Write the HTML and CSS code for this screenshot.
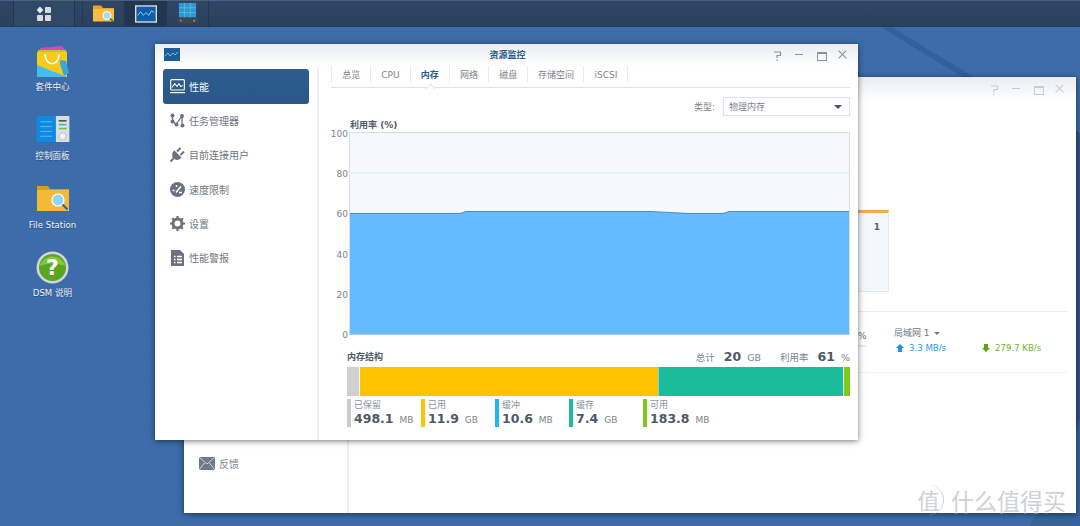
FILE: index.html
```html
<!DOCTYPE html>
<html lang="zh">
<head>
<meta charset="utf-8">
<title>资源监控</title>
<link rel="stylesheet" href="styles.css">
</head>
<body>
<div class="desktop">
  <svg class="wallpaper" viewBox="0 0 1080 526" preserveAspectRatio="none">
    <defs>
      <pattern id="dots" width="3" height="3" patternUnits="userSpaceOnUse"><rect width="1" height="1" fill="#fff" opacity=".02"/><rect x="1" y="1" width="1" height="1" fill="#000" opacity=".02"/></pattern>
    </defs>
    <rect width="1080" height="526" fill="#3d6cab"/>
    <polygon points="860,8 860,14 962,77 974,77" fill="#32609a"/>
    <polygon points="1076,130 1080,133 1080,526 1076,526" fill="#2d5689"/>
    <polygon points="1030,526 1080,420 1080,526" fill="#35639d"/>
    <rect width="1080" height="526" fill="url(#dots)"/>
  </svg>

  <header class="taskbar">
    <button class="tb-btn tb-main">
      <svg width="16" height="16" viewBox="0 0 16 16"><path d="M4 0.5 7.3 4 4 7.5 0.7 4Z" fill="#e8ecf0"/><rect x="9" y="1" width="6" height="6" rx=".8" fill="#d5dbe1"/><rect x="1" y="9" width="6" height="6" rx=".8" fill="#d5dbe1"/><rect x="9" y="9" width="6" height="6" rx=".8" fill="#d5dbe1"/></svg>
    </button>
    <button class="tb-btn tb-app">
      <svg width="23" height="19" viewBox="0 0 23 19"><path d="M1 1.500h8l2 2.500h11v13H1Z" fill="#e8a428"/><path d="M1 5h21v12.500H1Z" fill="#f8bd43"/><circle cx="15" cy="11.500" r="4" fill="#a5dcf5" stroke="#fff"/><path d="M18 14.500l3.500 3" stroke="#2b6d90" stroke-width="1.600"/></svg>
    </button>
    <button class="tb-btn tb-app tb-active">
      <svg width="22" height="18" viewBox="0 0 24 19"><rect x=".75" y=".75" width="22.500" height="17.500" fill="#0f5ea6" stroke="#d8dde3" stroke-width="1.500"/><path d="M3 11l3-4 3 4 3-3 3 3 3-5 3 2" fill="none" stroke="#9fd3f2"/></svg>
    </button>
    <button class="tb-btn tb-app">
      <svg width="21" height="23" viewBox="0 0 22 24"><rect x="2" y="1" width="18" height="15" fill="#2f97cf"/><path d="M2 6h18M2 11h18M8 1v15M14 1v15" stroke="#62bde3" stroke-width=".8"/><path d="M0 17h22v5H0Z" fill="#40464c"/><circle cx="4" cy="19.500" r="1" fill="#99a"/><circle cx="18" cy="19.500" r="1" fill="#99a"/></svg>
    </button>
  </header>

  <nav class="shortcuts">
    <div class="shortcut">
      <svg width="34" height="34" viewBox="0 0 34 34"><path d="M4 3 26 1l5 6H3Z" fill="#e040d0"/><path d="M2 5h28v2H2Z" fill="#a6d13c"/><path d="M1 7h30v25H1Z" fill="#f9c91c"/><path d="M1 20 31 32H1Z" fill="#43bdf0"/><path d="M9 9c0 13 14 13 14 0" fill="none" stroke="#fff" stroke-width="1.600"/><path d="M24 15l6 1 3 12-5 3-4-12Z" fill="#3aa5d8"/></svg>
      <span>套件中心</span>
    </div>
    <div class="shortcut">
      <svg class="drop" width="34" height="27" viewBox="0 0 34 28"><rect width="20" height="27" fill="#0f8ae0"/><path d="M4 6h12M4 11h12M4 16h12M4 21h12" stroke="#58bdf5"/><rect x="20" width="14" height="27" fill="#d9dee0"/><path d="M23 5h8" stroke="#444" stroke-width="1.500"/><path d="M23 9h8" stroke="#30b5e5" stroke-width="1.500"/><path d="M23 13h8" stroke="#77c030" stroke-width="1.500"/><circle cx="27" cy="21" r="3.500" fill="#f2f5f6" stroke="#aab" stroke-width=".6"/></svg>
      <span>控制面板</span>
    </div>
    <div class="shortcut">
      <svg class="drop" width="34" height="28" viewBox="0 0 34 28"><path d="M1 1h11l2 3h19v22H1Z" fill="#dc9a24"/><path d="M1 5h32v21H1Z" fill="#f7b738"/><circle cx="22" cy="15" r="6" fill="#8fd6f8" stroke="#fff" stroke-width="1.200"/><path d="M26.500 19.500l5 5" stroke="#2b6d90" stroke-width="2.200"/></svg>
      <span>File Station</span>
    </div>
    <div class="shortcut">
      <svg class="raise" width="33" height="33" viewBox="0 0 33 33"><circle cx="16.500" cy="16.500" r="16" fill="#cfd6dc"/><circle cx="16.500" cy="16.500" r="13.500" fill="#5aa51e"/><path d="M3.500 15a13.500 13.500 0 0 1 26 0Q16.500 10 3.500 15Z" fill="#83c53e"/><text x="16.500" y="23.500" text-anchor="middle" class="help-mark">?</text></svg>
      <span>DSM 说明</span>
    </div>
  </nav>

  <section class="window win-back">
    <div class="titlebar">
      <div class="controls controls-faint">
        <i class="c"><svg width="9" height="11" viewBox="0 0 9 11"><path d="M1 2H7.500V5.500H4V8M4 9.500V11" fill="none" stroke="currentColor" stroke-width="1.200"/></svg></i><i class="c c-min"></i><i class="c c-max"></i><i class="c c-close"></i>
      </div>
    </div>
    <div class="back-body">
      <aside class="back-side">
        <div class="feedback">
          <svg width="16" height="13" viewBox="0 0 16 13"><rect width="16" height="13" fill="#6f7a87"/><path d="M0 0l8 7 8-7M0 13l5.500-7M16 13l-5.500-7" fill="none" stroke="#e8eaed" stroke-width=".8"/></svg>
          <span>反馈</span>
        </div>
      </aside>
      <div class="back-main">
        <div class="back-top"><div class="card"><b>1</b></div></div>
        <div class="net-row">
          <span class="pct">%</span><i class="pct-bar"></i>
          <div class="net">
            <div class="net-name">局域网 1 <em class="caret"></em></div>
            <div class="net-rates">
              <span class="up"><svg width="8" height="8" viewBox="0 0 8 8"><path d="M4 0 8 4H6V8H2V4H0Z" fill="#1f93e8"/></svg>3.3 MB/s</span>
              <span class="down"><svg width="8" height="8" viewBox="0 0 8 8"><path d="M4 8 8 4H6V0H2V4H0Z" fill="#5aa512"/></svg>279.7 KB/s</span>
            </div>
          </div>
        </div>
      </div>
    </div>
  </section>

  <section class="window win-front">
    <div class="titlebar">
      <svg class="title-icon" width="16" height="13" viewBox="0 0 16 13"><rect width="16" height="13" fill="#1a5e9c"/><path d="M1 8l3-3 2 3 3-3 2 2 3-3" fill="none" stroke="#9ad0f0" stroke-width=".8"/></svg>
      <h1>资源监控</h1>
      <div class="controls">
        <i class="c"><svg width="9" height="11" viewBox="0 0 9 11"><path d="M1 2H7.500V5.500H4V8M4 9.500V11" fill="none" stroke="currentColor" stroke-width="1.200"/></svg></i><i class="c c-min"></i><i class="c c-max"></i><i class="c c-close"></i>
      </div>
    </div>
    <div class="front-body">
      <aside class="sidebar">
        <div class="side-item selected">
          <svg width="15" height="15" viewBox="0 0 16 16"><rect x=".7" y=".7" width="14.600" height="11" rx="1" fill="none" stroke="#fff" stroke-width="1.200"/><path d="M2 9l3-4 2.500 3 2-3 2 3 2-1" fill="none" stroke="#fff" stroke-width="1.100"/><path d="M0 14.500h16" stroke="#fff" stroke-width="1.300"/></svg>
          <span>性能</span>
        </div>
        <div class="side-item">
          <svg width="15" height="15" viewBox="0 0 15 15"><path d="M2.500 2.500V8L6 11.500l6-8.500V12.500" fill="none" stroke="#69737f" stroke-width="1.300"/><circle cx="2.500" cy="2.500" r="2" fill="#69737f"/><circle cx="2.500" cy="8.500" r="2" fill="#69737f"/><circle cx="6.500" cy="11.500" r="2" fill="#69737f"/><circle cx="12" cy="3" r="2" fill="#69737f"/><circle cx="12.500" cy="12.500" r="2" fill="#69737f"/></svg>
          <span>任务管理器</span>
        </div>
        <div class="side-item">
          <svg width="15" height="15" viewBox="0 0 15 15"><path d="M4.500 3.500 11.500 10.500C9.500 13.500 5.500 13.500 3.500 11.500S1.500 5.500 4.500 3.500Z" fill="#69737f"/><path d="M7 4.500 10.500 1M10.500 8l3.500-3.500M3.500 11.500 .5 14.500" stroke="#69737f" stroke-width="2"/></svg>
          <span>目前连接用户</span>
        </div>
        <div class="side-item">
          <svg width="15" height="15" viewBox="0 0 15 15"><circle cx="7.500" cy="7.500" r="7.500" fill="#69737f"/><path d="M2.500 8.500h2M6.500 3v2M11 4.500 7.500 8.500l-1.500 2" fill="none" stroke="#fff" stroke-width="1.500"/><path d="M9 10.500h3" stroke="#fff" stroke-width="1.500"/></svg>
          <span>速度限制</span>
        </div>
        <div class="side-item">
          <svg width="15" height="15" viewBox="0 0 15 15"><circle cx="7.500" cy="7.500" r="4.500" fill="none" stroke="#69737f" stroke-width="3"/><path d="M7.500 0v15M0 7.500h15M2.200 2.200l10.600 10.600M12.800 2.200 2.200 12.800" stroke="#69737f" stroke-width="2.200" stroke-dasharray="2.500 10 2.500 0"/></svg>
          <span>设置</span>
        </div>
        <div class="side-item">
          <svg width="15" height="16" viewBox="0 0 15 16"><path d="M1 0h9l4 4v12H1Z" fill="#69737f"/><path d="M4 6.500h1.500M7 6.500h5M4 9.500h1.500M7 9.500h5M4 12.500h1.500M7 12.500h5" stroke="#fff" stroke-width="1.300"/></svg>
          <span>性能警报</span>
        </div>
      </aside>
      <main class="panel">
        <ul class="tabs">
          <li>总览</li><li>CPU</li><li class="on">内存</li><li>网络</li><li>磁盘</li><li class="wide">存储空间</li><li class="wide2">iSCSI</li>
        </ul>
        <div class="type-row">
          <label>类型:</label>
          <div class="select"><span>物理内存</span><em class="caret dark"></em></div>
        </div>
        <div class="chart-title">利用率 (%)</div>
        <svg class="chart" width="519" height="212" viewBox="0 0 519 212">
          <rect x="18.500" y=".5" width="500" height="202" fill="#f5f9fe" stroke="#d6dee7"/>
          <path d="M19 41h499M19 81h499M19 122h499M19 162h499" stroke="#e2e8ef"/>
          <path d="M19 81.500H129L135 79.500H320L358 81.500H392L398 79.500H518V202.500H19Z" fill="#66baff"/>
          <path d="M19 81.500H129L135 79.500H320L358 81.500H392L398 79.500H518" fill="none" stroke="#3b78ad" stroke-width=".8"/>
          <g class="ticks">
            <text x="17" y="5">100</text><text x="17" y="45">80</text><text x="17" y="85">60</text><text x="17" y="126">40</text><text x="17" y="166">20</text><text x="17" y="206">0</text>
          </g>
        </svg>
        <div class="mem-head">
          <h2>内存结构</h2>
          <div class="mem-stats">
            <span class="st">总计</span><b>20</b><span class="un">GB</span>
            <span class="st st2">利用率</span><b>61</b><span class="un">%</span>
          </div>
        </div>
        <div class="mem-bar">
          <i class="seg s-res"></i><i class="seg s-used"></i><i class="seg s-buf"></i><i class="seg s-cache"></i><i class="seg s-free"></i>
        </div>
        <div class="legend">
          <div class="lg l-res"><small>已保留</small><p><b>498.1</b><span>MB</span></p></div>
          <div class="lg l-used"><small>已用</small><p><b>11.9</b><span>GB</span></p></div>
          <div class="lg l-buf"><small>缓冲</small><p><b>10.6</b><span>MB</span></p></div>
          <div class="lg l-cache"><small>缓存</small><p><b>7.4</b><span>GB</span></p></div>
          <div class="lg l-free"><small>可用</small><p><b>183.8</b><span>MB</span></p></div>
        </div>
      </main>
    </div>
  </section>

  <div class="watermark"><span class="wm-circle">值</span><span class="wm-text">什么值得买</span></div>
</div>
</body>
</html>
```
FILE: styles.css
```css
* { box-sizing: border-box; }
html, body { margin: 0; height: 100%; overflow: hidden; }
body { font-family: "DejaVu Sans", "Noto Sans CJK SC", sans-serif; font-size: 9px; color: #5b6570; }
.desktop { position: relative; width: 1080px; height: 526px; overflow: hidden; }
.wallpaper { position: absolute; inset: 0; width: 100%; height: 100%; }

.taskbar { position: relative; display: flex; height: 27px; padding-left: 13px; background: linear-gradient(rgba(46,69,99,.97), rgba(42,63,91,.97)); border-top: 1px solid #4a5f7a; border-bottom: 1px solid #253a56; }
.tb-btn { display: flex; align-items: center; justify-content: center; padding: 0; background: transparent; border: 0; border-left: 1px solid #22374f; }
.tb-main { width: 62px; background: #304966; margin-right: 7px; border-right: 1px solid #22374f; }
.tb-app { width: 42px; }
.tb-app:last-child { border-right: 1px solid #22374f; width: 43px; }
.tb-active { background: #223650; }

.shortcuts { position: absolute; left: 12px; top: 27px; width: 81px; display: flex; flex-direction: column; padding-top: 18px; }
.shortcut { height: 69px; display: flex; flex-direction: column; align-items: center; color: #fff; font-size: 8.6px; line-height: 12px; position: relative; }
.shortcut svg { display: block; }
.shortcut svg.drop { margin-top: 2px; }
.shortcut svg.raise { margin-top: -1px; }
.shortcut span { position: absolute; top: 36px; white-space: nowrap; text-shadow: 0 1px 1px rgba(0,0,0,.35); opacity: .92; }
.shortcut:last-child span { top: 35px; }
.help-mark { font: bold 22px "DejaVu Sans", sans-serif; fill: #fff; }

.window { position: absolute; background: #fff; box-shadow: 0 1px 6px rgba(0,0,0,.55); display: flex; flex-direction: column; }
.win-back { left: 184px; top: 77px; width: 892px; height: 436px; }
.win-front { left: 155px; top: 44px; width: 703px; height: 396px; }

.titlebar { position: relative; height: 22px; flex: none; display: flex; align-items: center; justify-content: center; padding-left: 2px; background: linear-gradient(#e9ecf1, #fff); }
.win-back .titlebar { height: 24px; }
.title-icon { position: absolute; left: 9px; top: 4px; }
h1 { margin: 0; font-size: 9px; font-weight: bold; color: #2a5a8e; line-height: 22px; }
.controls { position: absolute; right: 4px; top: 0; height: 22px; display: flex; align-items: center; }
.win-back .controls { height: 24px; right: 5px; }
.c { position: relative; display: flex; align-items: center; justify-content: center; width: 22px; height: 12px; color: #8a929c; }
.controls-faint .c { color: #c8ccd2; }
.c-min::before { content: ""; position: absolute; left: 7px; top: 5px; width: 8px; height: 1px; background: currentColor; }
.c-max::before { content: ""; position: absolute; left: 7px; top: 3px; width: 8px; height: 6px; border: 1px solid currentColor; border-top-width: 2px; }
.c-close::before, .c-close::after { content: ""; position: absolute; left: 5px; top: 5px; width: 11px; height: 1px; background: currentColor; transform: rotate(45deg); }
.c-close::after { transform: rotate(-45deg); }

.front-body { flex: 1; display: flex; min-height: 0; }
.sidebar { width: 164px; flex: none; padding: 3px 8px 0 8px; border-right: 2px solid #eef0f2; }
.side-item { height: 34.3px; display: flex; align-items: center; gap: 4px; padding-left: 7px; font-size: 10px; color: #6f7780; }
.side-item svg { flex: none; }
.side-item.selected { height: 35px; margin-bottom: -0.7px; background: linear-gradient(#2f5d90, #2a5688); border-radius: 3px; color: #fff; }
.panel { flex: 1; min-width: 0; padding: 0 8px 0 12px; display: flex; flex-direction: column; }

.tabs { list-style: none; margin: 0; padding: 0; height: 22px; display: flex; flex: none; border-bottom: 1px solid #dfe3e8; position: relative; }
.tabs li { width: 39.3px; height: 17px; display: flex; align-items: center; justify-content: center; border-left: 1px solid #e6ecf3; color: #7c848d; font-size: 9px; }
.tabs li.wide { width: 56px; }
.tabs li.wide2 { width: 45px; border-right: 1px solid #e6ecf3; }
.tabs li.on { color: #2a5a8e; font-weight: bold; position: relative; }
.tabs li.on::after { content: ""; position: absolute; left: 50%; top: 17px; width: 6px; height: 6px; margin-left: -3px; margin-top: 2px; background: #fff; border-left: 1px solid #dfe3e8; border-top: 1px solid #dfe3e8; transform: rotate(45deg); }

.type-row { display: flex; justify-content: flex-end; align-items: center; height: 19px; margin-top: 9px; flex: none; }
.type-row label { color: #7c848d; margin-right: 8px; font-size: 9px; }
.select { width: 127px; height: 19px; border: 1px solid #d9e2ec; display: flex; align-items: center; justify-content: space-between; padding: 0 7px 0 5px; color: #7c848d; font-size: 9px; }
.caret { display: inline-block; width: 0; height: 0; border: 3px solid transparent; border-top: 3px solid #6f7780; border-bottom: 0; vertical-align: middle; margin-left: 2px; }
.caret.dark { border-left-width: 4px; border-right-width: 4px; border-top: 4px solid #4a5560; }
.chart-title { font-weight: bold; font-size: 9px; line-height: 12px; color: #4f5965; margin-top: 3px; margin-left: 19px; flex: none; }
.chart { display: block; flex: none; margin-top: 1px; overflow: visible; }
.ticks text { font: 9px "DejaVu Sans", sans-serif; fill: #7c848d; text-anchor: end; }

.mem-head { display: flex; justify-content: space-between; align-items: center; height: 16px; margin: 4px 0 0 16px; flex: none; }
h2 { margin: 0; font-size: 9px; font-weight: bold; color: #4f5965; }
.mem-stats { display: flex; align-items: baseline; font-size: 9.5px; color: #7c848d; }
.mem-stats b { font-size: 12.5px; color: #4f5965; margin: 0 6px 0 9px; }
.mem-stats .st2 { margin-left: 19px; }
.mem-stats .un { font-size: 9.5px; }
.mem-bar { display: flex; height: 29px; margin: 3px 0 0 16px; flex: none; gap: 1px; }
.seg { display: block; height: 100%; }
.s-res { width: 12px; background: #cfcfcf; }
.s-used { width: 298px; background: #ffc300; }
.s-buf { width: 1px; background: #7fd0ee; margin-left: -1px; }
.s-cache { width: 184px; background: #1abc9c; margin-left: -1px; }
.s-free { flex: 1; background: #7ec81c; }
.legend { display: flex; margin: 3px 0 0 16px; flex: none; }
.lg { width: 74px; height: 28px; padding: 1px 0 0 3px; border-left: 4px solid #ccc; white-space: nowrap; }
.lg small { display: block; font-size: 9px; line-height: 11px; color: #8a929c; }
.lg p { margin: 0; line-height: 16px; color: #7c848d; }
.lg b { font-size: 12.5px; color: #4f5965; margin-right: 6px; }
.lg span { font-size: 9px; }
.l-used { border-color: #ffc300; }
.l-buf { border-color: #1fb8ee; }
.l-cache { border-color: #1abc9c; }
.l-free { border-color: #7ec81c; }

.back-body { flex: 1; display: flex; min-height: 0; }
.back-side { width: 165px; flex: none; border-right: 2px solid #eceef0; position: relative; }
.feedback { position: absolute; left: 15px; top: 355px; display: flex; align-items: center; gap: 4px; font-size: 10px; color: #7c848d; }
.back-main { flex: 1; padding-right: 9px; }
.back-top { height: 211px; padding-top: 109px; border-bottom: 1px solid #e8eaec; }
.card { margin-left: 508px; width: 32px; height: 82px; background: #f4f7fb; border-top: 3px solid #f5a84f; border-right: 1px solid #e4e7ea; border-bottom: 1px solid #e4e7ea; text-align: right; padding: 9px 8px 0 0; color: #555f6a; }
.net-row { position: relative; height: 61px; border-bottom: 1px solid #f1f2f4; padding-left: 545px; padding-top: 15px; }
.pct { position: absolute; left: 509px; top: 19px; color: #6f7780; font-size: 9px; }
.pct-bar { position: absolute; left: 509px; top: 33px; width: 8px; height: 2px; background: #e9ebed; }
.net-name { line-height: 12px; color: #6f7780; font-size: 9px; }
.net-rates { display: flex; margin-top: 3px; line-height: 13px; font-size: 8.6px; }
.net-rates svg { margin: 0 5px 0 2px; vertical-align: -1px; }
.up { width: 86px; color: #2f97e8; }
.down { color: #6db52a; }

.watermark { position: absolute; left: 914px; top: 485px; display: flex; align-items: center; gap: 7px; color: rgba(200,203,207,.9); font-family: "Noto Sans CJK SC", sans-serif; text-shadow: 0 1px 0 rgba(255,255,255,.6); }
.wm-circle { width: 30px; height: 30px; font-size: 22px; line-height: 28px; text-align: center; border-right: 1px solid rgba(200,203,207,.9); border-radius: 50%; }
.wm-text { font-size: 23px; line-height: 30px; white-space: nowrap; }
```
